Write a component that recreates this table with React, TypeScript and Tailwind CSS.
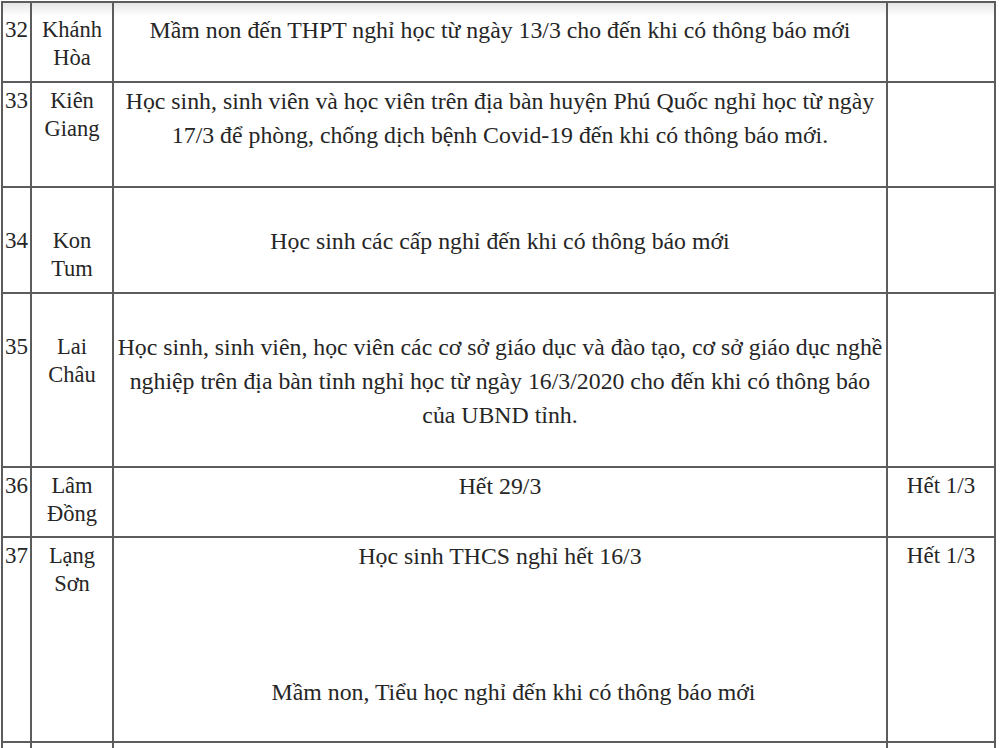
type Row = {
  no: string;
  province: string[];
  top: string;
  contentTop: string;
  content: React.ReactNode;
  last?: string;
  height: string;
  first?: boolean;
};

const rows: Row[] = [
  {
    no: '32',
    province: ['Khánh', 'Hòa'],
    top: 'pt-[13px]',
    contentTop: 'pt-[10px]',
    content: <p>Mầm non đến THPT nghỉ học từ ngày 13/3 cho đến khi có thông báo mới</p>,
    height: 'h-[78px]',
    first: true,
  },
  {
    no: '33',
    province: ['Kiên', 'Giang'],
    top: 'pt-[4px]',
    contentTop: 'pt-[1px]',
    content: (
      <p>
        Học sinh, sinh viên và học viên trên địa bàn huyện Phú Quốc nghỉ học từ ngày
        <br />
        17/3 để phòng, chống dịch bệnh Covid-19 đến khi có thông báo mới.
      </p>
    ),
    height: 'h-[103px]',
  },
  {
    no: '34',
    province: ['Kon', 'Tum'],
    top: 'pt-[39px]',
    contentTop: 'pt-[36px]',
    content: <p>Học sinh các cấp nghỉ đến khi có thông báo mới</p>,
    height: 'h-[104px]',
  },
  {
    no: '35',
    province: ['Lai', 'Châu'],
    top: 'pt-[39px]',
    contentTop: 'pt-[36px]',
    content: (
      <p>
        Học sinh, sinh viên, học viên các cơ sở giáo dục và đào tạo, cơ sở giáo dục nghề
        <br />
        nghiệp trên địa bàn tỉnh nghỉ học từ ngày 16/3/2020 cho đến khi có thông báo
        <br />
        của UBND tỉnh.
      </p>
    ),
    height: 'h-[172px]',
  },
  {
    no: '36',
    province: ['Lâm', 'Đồng'],
    top: 'pt-[4px]',
    contentTop: 'pt-[1px]',
    content: <p>Hết 29/3</p>,
    last: 'Hết 1/3',
    height: 'h-[68px]',
  },
  {
    no: '37',
    province: ['Lạng', 'Sơn'],
    top: 'pt-[4px]',
    contentTop: 'pt-[1px]',
    content: (
      <>
        <p>Học sinh THCS nghỉ hết 16/3</p>
        <p className="mt-[102px] pl-[27px]">Mầm non, Tiểu học nghỉ đến khi có thông báo mới</p>
      </>
    ),
    last: 'Hết 1/3',
    height: 'h-[203px]',
  },
  {
    // next row, only its top edge is in view
    no: '',
    province: [],
    top: 'pt-[4px]',
    contentTop: 'pt-[1px]',
    content: null,
    height: 'h-[68px]',
  },
];

export default function App() {
  return (
    <div
      className="w-[1000px] h-[748px] overflow-hidden bg-white text-[#262626] pt-[1px] pl-[1px]"
      style={{ fontFamily: '"Liberation Serif", "Times New Roman", serif' }}
    >
      <div className="w-[995px] grid grid-cols-[27px_80px_772px_106px] gap-[2px] p-[2px] bg-[#5c5c5c]">
        {rows.map((r, i) => {
          const bg = r.first ? 'bg-[linear-gradient(#e6e6e6,#ffffff_13px)]' : 'bg-white';
          return (
            <div key={i} className="contents">
              <div className={`${r.height} ${r.top} ${bg} text-center text-[23px] leading-[28px]`}>{r.no}</div>
              <div className={`${r.height} ${r.top} ${bg} text-center text-[22.5px] leading-[28px]`}>
                {r.province.map((p) => (
                  <div key={p}>{p}</div>
                ))}
              </div>
              <div className={`${r.height} ${r.contentTop} ${bg} text-center text-[23.8px] leading-[34px] whitespace-nowrap`}>
                {r.content}
              </div>
              <div className={`${r.height} ${r.top} ${bg} text-center text-[23px] leading-[28px]`}>{r.last}</div>
            </div>
          );
        })}
      </div>
    </div>
  );
}
